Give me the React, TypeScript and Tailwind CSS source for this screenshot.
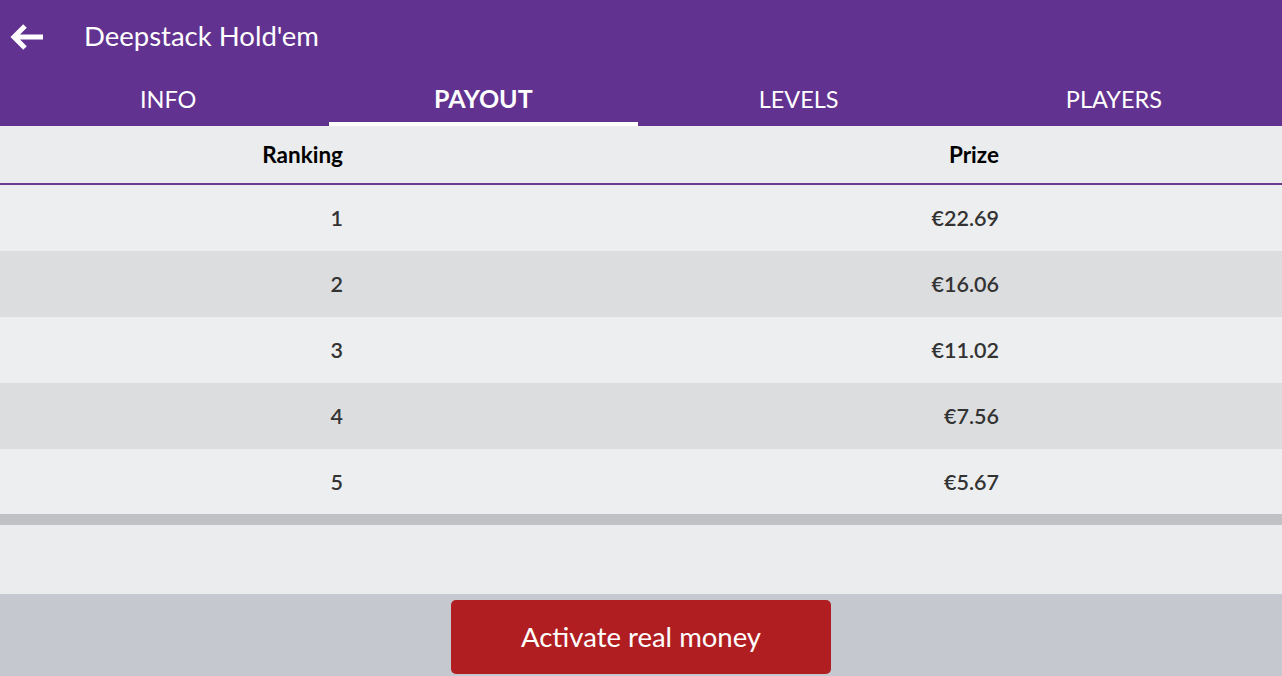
import React from "react";

const rows = [
  ["1", "€22.69"],
  ["2", "€16.06"],
  ["3", "€11.02"],
  ["4", "€7.56"],
  ["5", "€5.67"],
];

export default function App() {
  const font = { fontFamily: "Lato, 'Open Sans', sans-serif" };
  return (
    <div className="w-[1282px] h-[676px] flex flex-col overflow-hidden bg-[#ebecee]" style={font}>
      <div className="bg-[#623290] h-[126px] flex flex-col">
        <div className="h-[74px] flex items-center">
          <div className="w-[84px] pl-[9px] flex items-center">
            <svg width="36" height="28" viewBox="0 0 36 28">
              <path d="M34 14H5M16 3L5 14l11 11" stroke="white" strokeWidth="5" fill="none" strokeLinejoin="miter" strokeLinecap="butt" />
            </svg>
          </div>
          <span className="text-white text-[27.5px] leading-none -mt-[2px]">Deepstack Hold'em</span>
        </div>
        <div className="flex-1 flex px-[10.5px]">
          {["INFO", "PAYOUT", "LEVELS", "PLAYERS"].map((t) => (
            <div key={t} className="flex-1 flex flex-col items-center px-[3px]">
              <div
                className={`flex-1 flex items-center text-white leading-none ${
                  t === "PAYOUT" ? "font-bold text-[25px]" : "text-[23.5px] pt-[4px]"
                }`}
              >
                {t}
              </div>
              <div className={`h-[4px] w-full ${t === "PAYOUT" ? "bg-white" : ""}`} />
            </div>
          ))}
        </div>
      </div>
      <div className="h-[57px] flex items-center bg-[#ebecee] text-black font-bold text-[22.5px]">
        <div className="w-[343px] text-right">Ranking</div>
        <div className="w-[656px] text-right">Prize</div>
      </div>
      <div className="h-[2px] bg-[#6b3b8f]" />
      {rows.map(([r, p], i) => (
        <div
          key={r}
          className={`h-[66px] flex items-center text-[21.5px] text-[#333333] font-semibold ${
            i % 2 === 0 ? "bg-[#edeef0]" : "bg-[#dcdddf]"
          }`}
        >
          <div className="w-[343px] text-right">{r}</div>
          <div className="w-[656px] text-right">{p}</div>
        </div>
      ))}
      <div className="h-[11px] bg-[#c0c1c5] -mt-[1px]" />
      <div className="h-[69px] bg-[#ebecee]" />
      <div className="flex-1 bg-[#c6c8d0] flex justify-center pt-[6px]">
        <div className="w-[380px] h-[74px] bg-[#b01e22] rounded-[5px] flex items-center justify-center text-white text-[27.5px]">
          Activate real money
        </div>
      </div>
    </div>
  );
}
